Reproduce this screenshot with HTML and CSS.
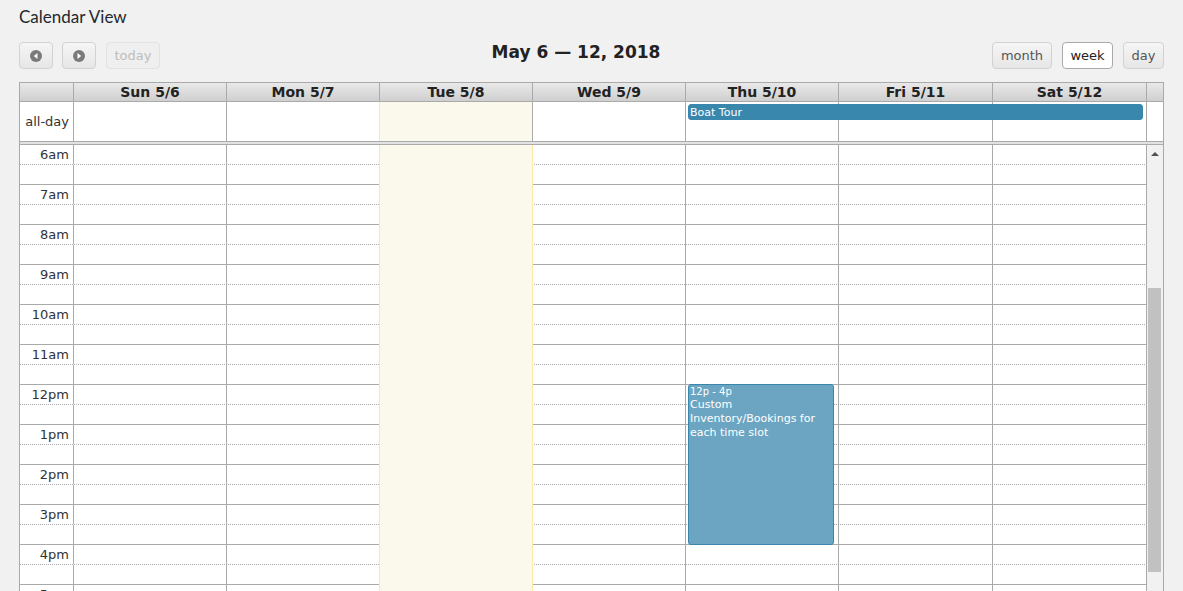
FILE: index.html
```html
<!DOCTYPE html>
<html lang="en">
<head>
    <meta charset="UTF-8">
    <meta name="viewport" content="width=device-width, initial-scale=1.0">
    <title>Calendar View</title>
    <link rel="stylesheet" href="styles.css">
</head>
<body>
    <div class="wrap">
        <h1 class="page-title">Calendar View</h1>

        <div class="toolbar">
            <div class="tb-left">
                <button class="btn btn-icon" type="button" aria-label="prev">
                    <svg width="12" height="12" viewBox="0 0 12 12"><circle cx="6" cy="6" r="6" fill="#7a7a7a"/><polygon points="7.5,3 7.5,9 3.8,6" fill="#fff"/></svg>
                </button>
                <button class="btn btn-icon" type="button" aria-label="next">
                    <svg width="12" height="12" viewBox="0 0 12 12"><circle cx="6" cy="6" r="6" fill="#7a7a7a"/><polygon points="4.5,3 4.5,9 8.2,6" fill="#fff"/></svg>
                </button>
                <button class="btn btn-disabled" type="button">today</button>
            </div>
            <h2 class="tb-title">May 6 — 12, 2018</h2>
            <div class="tb-right">
                <button class="btn btn-month" type="button">month</button>
                <button class="btn btn-week btn-active" type="button">week</button>
                <button class="btn btn-day" type="button">day</button>
            </div>
        </div>

        <div class="cal">
            <!-- day headers -->
            <div class="row head">
                <div class="cell axis"></div>
                <div class="cell">Sun 5/6</div>
                <div class="cell">Mon 5/7</div>
                <div class="cell">Tue 5/8</div>
                <div class="cell">Wed 5/9</div>
                <div class="cell">Thu 5/10</div>
                <div class="cell">Fri 5/11</div>
                <div class="cell">Sat 5/12</div>
                <div class="cell gutter"></div>
            </div>

            <!-- all-day row -->
            <div class="row allday">
                <div class="cell axis">all-day</div>
                <div class="cell"></div>
                <div class="cell pre-today"></div>
                <div class="cell today"></div>
                <div class="cell"></div>
                <div class="cell event-holder">
                    <div class="ad-event">Boat Tour</div>
                </div>
                <div class="cell"></div>
                <div class="cell"></div>
                <div class="cell gutter"></div>
            </div>

            <div class="divider"></div>

            <!-- time grid -->
            <div class="tg">
                <div class="tg-scroll">
                    <div class="slats">
                        <div class="slat"><div class="slat-axis">6am</div></div>
                        <div class="slat half"><div class="slat-axis"></div></div>
                        <div class="slat"><div class="slat-axis">7am</div></div>
                        <div class="slat half"><div class="slat-axis"></div></div>
                        <div class="slat"><div class="slat-axis">8am</div></div>
                        <div class="slat half"><div class="slat-axis"></div></div>
                        <div class="slat"><div class="slat-axis">9am</div></div>
                        <div class="slat half"><div class="slat-axis"></div></div>
                        <div class="slat"><div class="slat-axis">10am</div></div>
                        <div class="slat half"><div class="slat-axis"></div></div>
                        <div class="slat"><div class="slat-axis">11am</div></div>
                        <div class="slat half"><div class="slat-axis"></div></div>
                        <div class="slat"><div class="slat-axis">12pm</div></div>
                        <div class="slat half"><div class="slat-axis"></div></div>
                        <div class="slat"><div class="slat-axis">1pm</div></div>
                        <div class="slat half"><div class="slat-axis"></div></div>
                        <div class="slat"><div class="slat-axis">2pm</div></div>
                        <div class="slat half"><div class="slat-axis"></div></div>
                        <div class="slat"><div class="slat-axis">3pm</div></div>
                        <div class="slat half"><div class="slat-axis"></div></div>
                        <div class="slat"><div class="slat-axis">4pm</div></div>
                        <div class="slat half"><div class="slat-axis"></div></div>
                        <div class="slat"><div class="slat-axis">5pm</div></div>
                        <div class="slat half"><div class="slat-axis"></div></div>
                        <div class="slat"><div class="slat-axis">6pm</div></div>
                        <div class="slat half"><div class="slat-axis"></div></div>
                    </div>

                    <!-- day columns lie over the slats -->
                    <div class="tg-cols">
                        <div class="tg-spacer"></div>
                        <div class="tg-col"></div>
                        <div class="tg-col pre-today"></div>
                        <div class="tg-col today"></div>
                        <div class="tg-col"></div>
                        <div class="tg-col event-holder">
                            <div class="tg-event">
                                <div class="ev-time">12p - 4p</div>
                                <div class="ev-title">Custom Inventory/Bookings for each time slot</div>
                            </div>
                        </div>
                        <div class="tg-col"></div>
                        <div class="tg-col"></div>
                    </div>
                </div>

                <div class="scrollbar">
                    <div class="sb-up"><span class="sb-arrow"></span></div>
                    <div class="sb-thumb"></div>
                </div>
            </div>
        </div>
    </div>
</body>
</html>
```

FILE: styles.css
```css
html,
body {
    margin: 0;
    overflow: hidden;
}

body {
    background-color: #f1f1f1;
    color: #333;
    font-family: "DejaVu Sans", Verdana, sans-serif;
    font-size: 13px;
}

.wrap {
    padding: 0 19px;
}

.page-title {
    margin: 0;
    padding-top: 5px;
    height: 37px;
    box-sizing: border-box;
    font-family: Lato, "Open Sans", sans-serif;
    font-size: 17px;
    font-weight: normal;
    line-height: 24px;
    color: #23282d;
}

/* toolbar */

.toolbar {
    display: flex;
    align-items: flex-start;
    margin-top: 5px;
    margin-bottom: 13px;
}

.tb-left {
    display: flex;
    gap: 9px;
}

.tb-left .btn-disabled {
    margin-left: 1px;
}

.tb-right {
    display: flex;
    gap: 10px;
}

.tb-title {
    flex: 1;
    margin: 0;
    text-align: center;
    font-size: 17px;
    line-height: 20px;
    font-weight: bold;
    color: #222;
}

.btn {
    height: 27px;
    padding: 0;
    border: 1px solid #d2d2d2;
    border-radius: 4px;
    background: linear-gradient(#f5f5f5 0%, #eeeeee 50%, #e6e6e6 100%);
    font-family: "DejaVu Sans", Verdana, sans-serif;
    font-size: 13px;
    color: #555;
    cursor: pointer;
}

.btn-icon {
    width: 34px;
    display: flex;
    align-items: center;
    justify-content: center;
}

.btn-icon svg {
    display: block;
}

.btn-disabled {
    width: 54px;
    background: #efefef;
    border-color: #e2e2e2;
    color: #bdbdbd;
}

.btn-month {
    width: 60px;
}

.btn-week {
    width: 51px;
}

.btn-day {
    width: 41px;
}

.btn-active {
    background: #fff;
    border-color: #a9a9a9;
    color: #222;
}

/* calendar table */

.cal {
    border: 1px solid #aaa;
    border-bottom: none;
    background: #fff;
}

.row {
    display: grid;
    grid-template-columns: 54px 153px 153px 153px 153px 153px 154px 154px 16px;
}

.cell {
    border-right: 1px solid #aaa;
    box-sizing: border-box;
    min-width: 0;
}

.cell.gutter {
    border-right: none;
}

.head {
    border-bottom: 1px solid #aaa;
}

.head .cell {
    height: 18px;
    background: linear-gradient(#e9e9e9, #cfcfcf);
    font-weight: bold;
    font-size: 14px;
    line-height: 18px;
    text-align: center;
    color: #222;
}

.allday .cell {
    height: 39px;
}

.axis {
    text-align: right;
    padding-right: 4px;
}

.allday .axis {
    line-height: 39px;
}

.today {
    background: #fbf8ec;
}

.cell.pre-today,
.tg-col.pre-today,
.tg-col.today {
    border-right-color: #f8e9ab;
}

.event-holder {
    position: relative;
}

.ad-event {
    position: absolute;
    top: 2px;
    left: 2px;
    width: calc(300% - 1px);
    height: 16px;
    box-sizing: border-box;
    padding: 0 1px;
    border: 1px solid #3a87ad;
    border-radius: 3px;
    background: #3a87ad;
    color: #fff;
    font-size: 11px;
    line-height: 15px;
    overflow: hidden;
}

.divider {
    height: 2px;
    border-top: 1px solid #aaa;
    border-bottom: 1px solid #aaa;
    background: #e2e2e2;
}

/* time grid */

.tg {
    display: flex;
}

.tg-scroll {
    flex: 1;
    position: relative;
}

.slat {
    height: 19px;
    border-bottom: 1px dotted #aaa;
}

.slat.half {
    border-bottom: 1px solid #aaa;
}

.slat-axis {
    width: 54px;
    height: 100%;
    box-sizing: border-box;
    border-right: 1px solid #aaa;
    padding-right: 4px;
    text-align: right;
    line-height: 20px;
}

.tg-cols {
    position: absolute;
    top: 0;
    left: 0;
    right: 0;
    bottom: 0;
    display: grid;
    grid-template-columns: 54px 153px 153px 153px 153px 153px 154px 154px;
}

.tg-col {
    border-right: 1px solid #aaa;
    min-width: 0;
}

.tg-event {
    position: absolute;
    top: 239px;
    left: 2px;
    right: 4px;
    height: 161px;
    box-sizing: border-box;
    padding: 0 1px;
    border: 1px solid #3a87ad;
    border-radius: 3px;
    background: #6ba5c2;
    color: #fff;
}

.ev-time {
    font-size: 10px;
    line-height: 13px;
}

.ev-title {
    font-size: 11px;
    line-height: 14px;
}

/* scrollbar */

.scrollbar {
    width: 16px;
    background: #f1f1f1;
    display: flex;
    flex-direction: column;
}

.sb-up {
    height: 17px;
    display: flex;
    align-items: center;
    justify-content: center;
}

.sb-arrow {
    width: 0;
    height: 0;
    border-left: 4px solid transparent;
    border-right: 4px solid transparent;
    border-bottom: 4px solid #505050;
}

.sb-thumb {
    margin: 126px 2px 0 1px;
    height: 284px;
    background: #c1c1c1;
}
```
